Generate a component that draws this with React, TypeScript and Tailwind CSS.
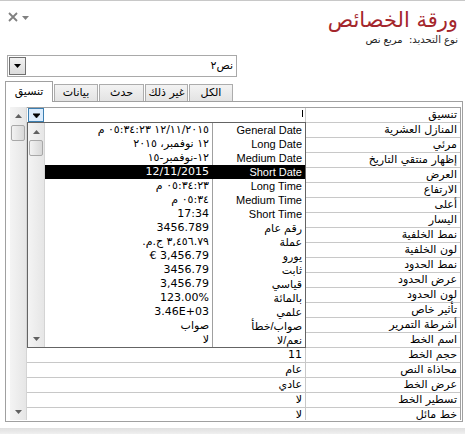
import React from 'react';

// ─── Data ─────────────────────────────────────────────────────────────────────

const props: [string, string][] = [
  ['تنسيق', ''],
  ['المنازل العشرية', ''],
  ['مرئي', ''],
  ['إظهار منتقي التاريخ', ''],
  ['العرض', ''],
  ['الارتفاع', ''],
  ['أعلى', ''],
  ['اليسار', ''],
  ['نمط الخلفية', ''],
  ['لون الخلفية', ''],
  ['نمط الحدود', ''],
  ['عرض الحدود', ''],
  ['لون الحدود', ''],
  ['تأثير خاص', ''],
  ['أشرطة التمرير', ''],
  ['اسم الخط', ''],
  ['حجم الخط', '11'],
  ['محاذاة النص', 'عام'],
  ['عرض الخط', 'عادي'],
  ['تسطير الخط', 'لا'],
  ['خط مائل', 'لا'],
];

const formats: [string, string][] = [
  ['General Date', '١٢/١١/٢٠١٥ ٠٥:٣٤:٢٣ م'],
  ['Long Date', '١٢ نوفمبر، ٢٠١٥'],
  ['Medium Date', '١٢-نوفمبر-١٥'],
  ['Short Date', '12/11/2015'],
  ['Long Time', '٠٥:٣٤:٢٣ م'],
  ['Medium Time', '٠٥:٣٤ م'],
  ['Short Time', '17:34'],
  ['رقم عام', '3456.789'],
  ['عملة', '٣,٤٥٦.٧٩ ج.م.'],
  ['يورو', '3,456.79 €'],
  ['ثابت', '3456.79'],
  ['قياسي', '3,456.79'],
  ['بالمائة', '123.00%'],
  ['علمي', '3.46E+03'],
  ['صواب/خطأ', 'صواب'],
  ['نعم/لا', 'لا'],
];

const tabs = [
  { label: 'بيانات', w: 'w-[44px]' },
  { label: 'حدث', w: 'w-[45px]' },
  { label: 'غير ذلك', w: 'w-[43px]' },
  { label: 'الكل', w: 'w-[44px]' },
];

// ─── Small drawings ───────────────────────────────────────────────────────────

function Arrow({ up = false, className = '' }: { up?: boolean; className?: string }) {
  return (
    <svg width="7" height="4" viewBox="0 0 7 4" className={className}>
      {up ? <path d="M0 4 L3.5 0 L7 4 Z" fill="#606060" /> : <path d="M0 0 L7 0 L3.5 4 Z" fill="#606060" />}
    </svg>
  );
}

function ScrollBar({ thumbTop }: { thumbTop: string }) {
  return (
    <div className="w-[17px] h-full shrink-0 flex flex-col bg-gradient-to-r from-[#f4f4f4] to-[#e6e6e6] border-r border-[#d4d4d4]">
      <div className="h-[17px] flex items-center justify-center">
        <Arrow up />
      </div>
      <div className={`${thumbTop} mx-[1px] h-[16px] rounded-[2px] border border-[#a8a8a8] bg-gradient-to-r from-[#f2f2f2] to-[#d8d8d8]`} />
      <div className="flex-1" />
      <div className="h-[17px] flex items-center justify-center">
        <Arrow />
      </div>
    </div>
  );
}

// ─── Property sheet ───────────────────────────────────────────────────────────

export default function App() {
  return (
    <div className="w-[465px] h-[434px] bg-white relative overflow-hidden border-t border-[#c8c8c8] font-['Liberation_Sans','DejaVu_Sans',sans-serif] text-black">
      {/* Header */}
      <div className="h-[54px] flex justify-between">
        <div className="pl-[8px] pt-[11px] flex items-start gap-[4px]">
          <svg width="10" height="10" viewBox="0 0 10 10">
            <path d="M1 1 L9 9 M9 1 L1 9" stroke="#808080" strokeWidth="1.8" />
          </svg>
          <svg width="7" height="4" viewBox="0 0 7 4" className="mt-[4px]">
            <path d="M0 0 L7 0 L3.5 4 Z" fill="#808080" />
          </svg>
        </div>
        <div dir="rtl" className="pr-[7px] pt-[5px] text-right">
          <div className="text-[21px] leading-[28px] text-[#a4262c] font-['DejaVu_Sans',sans-serif]">ورقة الخصائص</div>
          <div className="text-[10px] leading-[12px] text-[#222] font-['DejaVu_Sans',sans-serif]">نوع التحديد:&nbsp;&nbsp;مربع نص</div>
        </div>
      </div>

      {/* Object selector */}
      <div className="ml-[7px] w-[230px] h-[22px] border border-[#a9a9a9] flex items-center">
        <div className="ml-[1px] w-[17px] h-[18px] border border-[#707070] bg-gradient-to-b from-[#f2f2f2] to-[#dcdcdc] flex items-center justify-center">
          <svg width="7" height="4" viewBox="0 0 7 4">
            <path d="M0 0 L7 0 L3.5 4 Z" fill="#000" />
          </svg>
        </div>
        <div dir="rtl" className="flex-1 pr-[3px] text-[11px] font-['DejaVu_Sans',sans-serif]">نص٢</div>
      </div>

      {/* Tabs */}
      <div className="mt-[4px] ml-[5px] h-[20px] flex items-end gap-[1px] relative z-10">
        <div dir="rtl" className="w-[48px] h-[21px] -mb-[1px] bg-white border border-b-0 border-[#a0a0a0] flex items-center justify-center text-[11px] font-['DejaVu_Sans',sans-serif]">
          تنسيق
        </div>
        {tabs.map((t) => (
          <div
            key={t.label}
            dir="rtl"
            className={`${t.w} h-[17px] bg-gradient-to-b from-[#f3f3f3] to-[#e3e3e3] border border-b-0 border-[#acacac] flex items-center justify-center text-[11px] font-['DejaVu_Sans',sans-serif]`}
          >
            {t.label}
          </div>
        ))}
      </div>

      {/* Panel */}
      <div className="ml-[5px] w-[458px] h-[321px] border border-[#a0a0a0] pt-[5px] pl-[4px] pr-[1px]">
        <div className="h-[313px] flex overflow-hidden">
          <ScrollBar thumbTop="mt-[1px]" />

          <div className="flex-1 relative border-t border-r border-[#a0a0a0] overflow-hidden">
            {props.map(([label, value]) => (
              <div key={label} className="h-[15px] flex border-b border-[#c8c8c8] text-[11px] leading-[14px] font-['DejaVu_Sans',sans-serif]">
                <div dir="rtl" className="w-[279px] shrink-0 border-r border-[#c8c8c8] pr-[3px] text-right">
                  {value}
                </div>
                <div dir="rtl" className="flex-1 pr-[3px] text-right whitespace-nowrap">
                  {label}
                </div>
              </div>
            ))}

            {/* Format combo being edited */}
            <div className="absolute left-[1px] top-0 w-[16px] h-[14px] bg-[#dcecfc] border border-[#3c7fb1] flex items-center justify-center">
              <svg width="7" height="5" viewBox="0 0 7 5">
                <path d="M0 0 L7 0 M0 1 L7 1 L3.5 5 Z" stroke="#000" strokeWidth="0.6" fill="#000" />
              </svg>
            </div>
            <div className="absolute left-[275px] top-[2px] w-[1px] h-[7px] bg-black" />

            {/* Open drop-down list */}
            <div className="absolute left-0 top-[14px] w-[279px] h-[226px] border border-[#646464] bg-white flex">
              <ScrollBar thumbTop="mt-0" />
              <div className="flex-1 flex flex-col">
                {formats.map(([name, sample]) => {
                  const sel = name === 'Short Date';
                  return (
                    <div key={name} className={`h-[14px] flex text-[11px] leading-[14px] whitespace-nowrap ${sel ? 'bg-black text-white' : ''}`}>
                      <div dir="rtl" className={`w-[168px] shrink-0 border-r pr-[3px] text-right font-['DejaVu_Sans',sans-serif] ${sel ? 'border-black' : 'border-[#a0a0a0]'}`}>
                        {sample}
                      </div>
                      <div dir="rtl" className="flex-1 pr-[3px] text-right">
                        {name}
                      </div>
                    </div>
                  );
                })}
              </div>
            </div>
          </div>
        </div>
      </div>

      {/* Bottom edge */}
      <div className="absolute left-0 bottom-0 w-full h-[6px] bg-gradient-to-b from-[#e0e0e0] to-[#f0f0f0]" />
    </div>
  );
}
